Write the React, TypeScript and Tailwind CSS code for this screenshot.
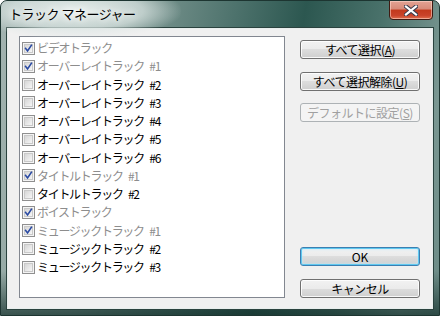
import React from 'react';

type Track = { label: string; checked: boolean };

const tracks: Track[] = [
  { label: 'ビデオトラック', checked: true },
  { label: 'オーバーレイトラック #1', checked: true },
  { label: 'オーバーレイトラック #2', checked: false },
  { label: 'オーバーレイトラック #3', checked: false },
  { label: 'オーバーレイトラック #4', checked: false },
  { label: 'オーバーレイトラック #5', checked: false },
  { label: 'オーバーレイトラック #6', checked: false },
  { label: 'タイトルトラック #1', checked: true },
  { label: 'タイトルトラック #2', checked: false },
  { label: 'ボイストラック', checked: true },
  { label: 'ミュージックトラック #1', checked: true },
  { label: 'ミュージックトラック #2', checked: false },
  { label: 'ミュージックトラック #3', checked: false },
];

const font = "font-['MS_UI_Gothic','Noto_Sans_CJK_JP',sans-serif]";

const CheckBox: React.FC<{ checked: boolean }> = ({ checked }) => (
  <div className="w-[13px] h-[13px] shrink-0 border border-[#8f8f8f] bg-[#f4f4f4] p-px">
    <div className="w-full h-full border border-[#c9c9c9] bg-[linear-gradient(135deg,#d6d6d6,#f6f6f6)] relative">
      {checked && (
        <svg viewBox="0 0 9 9" className="absolute inset-0 w-full h-full overflow-visible">
          <path d="M0.8 4.4 L3.3 7.6 L8.2 0.4" fill="none" stroke="#2a4aa3" strokeWidth="2.1" strokeLinecap="square" />
        </svg>
      )}
    </div>
  </div>
);

const Button: React.FC<{ children: React.ReactNode; variant?: 'normal' | 'default' | 'disabled'; className?: string }> = ({
  children,
  variant = 'normal',
  className = '',
}) => {
  const styles = {
    normal:
      'border-[#707070] text-black bg-[linear-gradient(to_bottom,#f2f2f2_0%,#ebebeb_50%,#dddddd_50%,#cfcfcf_100%)] shadow-[inset_0_0_0_1px_rgba(255,255,255,0.85)]',
    default:
      'border-[#3c7fb1] text-black bg-[linear-gradient(to_bottom,#f2f2f2_0%,#ebebeb_50%,#dddddd_50%,#cfcfcf_100%)] shadow-[inset_0_0_0_1px_#5fc8f0,inset_0_0_3px_1px_#bfe9fa]',
    disabled: 'border-[#adb2b5] text-[#a0a0a0] bg-[#f4f4f4]',
  }[variant];
  return (
    <div className={`h-[19px] w-[120px] rounded-[3px] border flex items-center justify-center text-[12px] leading-none ${styles} ${className}`}>
      {children}
    </div>
  );
};

const App: React.FC = () => {
  return (
    <div className={`w-[440px] h-[316px] relative overflow-hidden rounded-t-[7px] border border-[#1d3531] flex flex-col bg-[linear-gradient(to_bottom,transparent_86%,rgba(18,46,41,0.7)_100%),linear-gradient(100deg,#a3b4b1_0%,#849d98_25%,#4d726c_48%,#2c5750_62%,#4a726b_78%,#7a9792_92%,#6a8a85_100%)] ${font}`}>
      {/* Title bar */}
      <div className="h-[26px] flex items-start relative">
        <div className="absolute left-[-30px] top-[-18px] w-[210px] h-[56px] rounded-full bg-[radial-gradient(ellipse_at_center,rgba(235,242,240,0.95)_0%,rgba(220,230,228,0.7)_45%,transparent_72%)]" />
        <span className="relative ml-[8px] mt-[6px] text-[13px] leading-none tracking-[-0.5px] text-black [text-shadow:0_0_6px_white,0_0_10px_white]">
          トラック マネージャー
        </span>
        {/* Close button */}
        <div className="absolute right-[6px] top-[-1px] w-[44px] h-[20px] rounded-b-[4px] border border-[#3f1a12] shadow-[inset_0_0_0_1px_rgba(255,220,210,0.55)] bg-[linear-gradient(to_bottom,#e3a394_0%,#d78a78_45%,#c2391c_50%,#c9432a_80%,#e0704e_100%)] flex items-center justify-center">
          <svg width="14" height="11" viewBox="0 0 14 11">
            <path d="M2 1.5 L12 9.5 M12 1.5 L2 9.5" stroke="#3c3c4c" strokeWidth="4.2" strokeLinecap="square" />
            <path d="M2 1.5 L12 9.5 M12 1.5 L2 9.5" stroke="#ffffff" strokeWidth="2.2" strokeLinecap="square" />
          </svg>
        </div>
      </div>

      {/* Client frame */}
      <div className="mx-[5px] mb-[5px] flex-1 border border-[#2a423e] flex">
        <div className="flex-1 border border-[#e8eeed] flex">
          <div className="flex-1 bg-[#f0f0f0] flex pl-[11px] pr-[12px]">
            {/* Track list */}
            <div className="w-[266px] mt-[7px] mb-[10px] bg-white border border-[#828790] pt-[2px] pl-[2px]">
              {tracks.map((t) => (
                <div key={t.label} className="h-[18.25px] flex items-center gap-[2px]">
                  <CheckBox checked={t.checked} />
                  <span className={`text-[12px] leading-none tracking-[-1.3px] [word-spacing:4px] whitespace-pre ${t.checked ? 'text-[#8d8d8d]' : 'text-black'}`}>
                    {t.label}
                  </span>
                </div>
              ))}
            </div>

            {/* Buttons */}
            <div className="ml-[15px] pt-[11px] pb-[10px] flex flex-col">
              <Button>
                <span className="tracking-[-0.5px]">すべて選択(<span className="underline">A</span>)</span>
              </Button>
              <Button className="mt-[13px]">
                <span className="tracking-[-0.5px]">すべて選択解除(<span className="underline">U</span>)</span>
              </Button>
              <Button variant="disabled" className="mt-[12px]">
                <span className="tracking-[-0.5px]">デフォルトに設定(<span className="underline">S</span>)</span>
              </Button>
              <Button variant="default" className="mt-auto">
                OK
              </Button>
              <Button className="mt-[13px]">
                <span className="tracking-[-0.5px]">キャンセル</span>
              </Button>
            </div>
          </div>
        </div>
      </div>
    </div>
  );
};

export default App;
